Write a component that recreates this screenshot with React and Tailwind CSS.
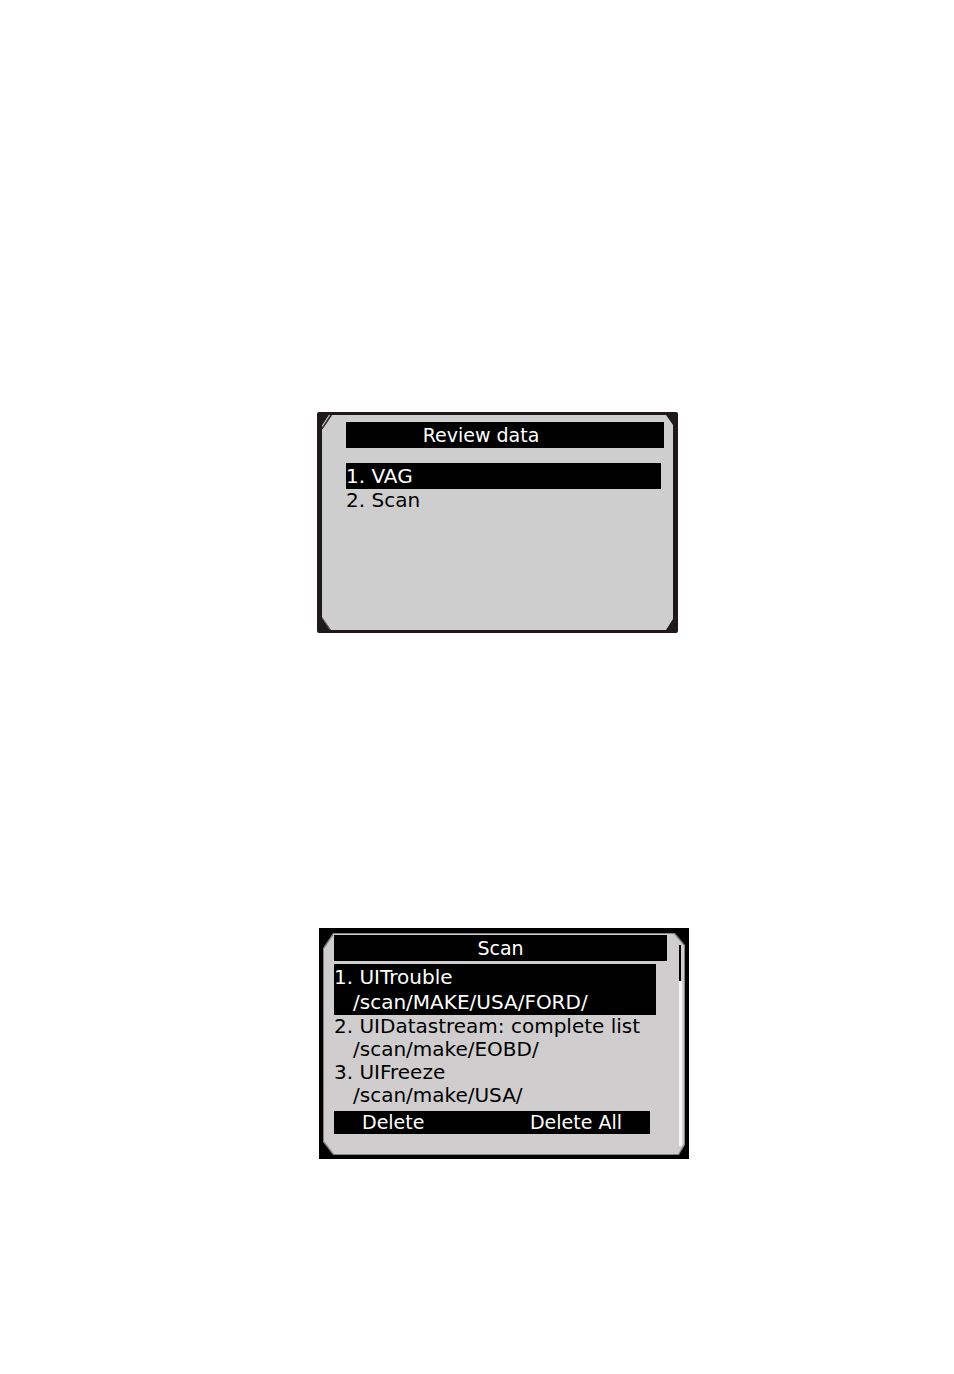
const files = [
  { name: "2. UIDatastream: complete list", path: "/scan/make/EOBD/" },
  { name: "3. UIFreeze", path: "/scan/make/USA/" },
];

function ReviewScreen() {
  return (
    <section
      aria-labelledby="review-title"
      className="relative w-full max-w-[361px] rounded-[2px] bg-[#1f1a19] px-[5px] py-[3px]"
    >
      <div className="min-h-[215px] bg-[#cecece] pt-[7px] pr-[9px] pl-6 [clip-path:polygon(9px_0,calc(100%-7px)_0,100%_10px,100%_calc(100%-11px),calc(100%-7px)_100%,9px_100%,0_calc(100%-13px),0_13px)]">
        <h2
          id="review-title"
          className="bg-black pr-12 text-center leading-[26px] text-white"
        >
          Review data
        </h2>
        <ul className="mt-[15px] mr-[3px] text-[20px]">
          <li>
            <button className="block w-full bg-black text-left leading-[26px] text-white">
              1. VAG
            </button>
          </li>
          <li>
            <button className="block w-full text-left leading-[23px]">
              2. Scan
            </button>
          </li>
        </ul>
      </div>
      <svg
        aria-hidden="true"
        className="absolute top-[3px] left-[5px]"
        width="11"
        height="15"
        viewBox="0 0 11 15"
        fill="none"
      >
        <path d="M0 11.5 7.5 0" stroke="#cecece" strokeWidth="1.2" />
        <path d="M0 14 9.5 0" stroke="#1f1a19" strokeWidth="1.2" />
      </svg>
      <svg
        aria-hidden="true"
        className="absolute bottom-[3px] left-[5px]"
        width="11"
        height="15"
        viewBox="0 0 11 15"
        fill="none"
      >
        <path d="M0 2.5 8 15" stroke="#777270" strokeWidth="0.8" />
      </svg>
    </section>
  );
}

function ScanScreen() {
  return (
    <section
      aria-labelledby="scan-title"
      className="ml-[13px] w-full max-w-[370px] bg-black px-1 pt-[5px] pb-1"
    >
      <div className="bg-[#858585] p-px [clip-path:polygon(10px_0,calc(100%-10px)_0,100%_12px,100%_calc(100%-10px),calc(100%-6px)_100%,10px_100%,0_calc(100%-13px),0_15px)]">
        <div className="flex bg-[#cfcdce] pb-5 pl-[10px] [clip-path:polygon(10px_0,calc(100%-10px)_0,100%_12px,100%_calc(100%-10px),calc(100%-6px)_100%,10px_100%,0_calc(100%-13px),0_15px)]">
          <div className="flex-1 pt-px">
            <h2
              id="scan-title"
              className="bg-black text-center leading-[26px] text-white"
            >
              Scan
            </h2>
            <ul className="mt-[3px] text-[20px]">
              <li className="mr-[11px]">
                <button className="block w-full bg-black pt-px text-left leading-[25px] text-white">
                  1. UITrouble
                  <span className="block pl-[19px]">/scan/MAKE/USA/FORD/</span>
                </button>
              </li>
              {files.map((file) => (
                <li key={file.name}>
                  <button className="block w-full text-left leading-[23px]">
                    {file.name}
                    <span className="block pl-[19px]">{file.path}</span>
                  </button>
                </li>
              ))}
            </ul>
            <div className="mt-1 mr-[17px] flex justify-between bg-black px-7 leading-[23px] text-white">
              <button>Delete</button>
              <button>Delete All</button>
            </div>
          </div>
          <div className="mr-[2px] -mb-3 ml-3 flex w-[3px] flex-col pt-[11px]">
            <div className="mr-px h-9 bg-black" />
            <div className="flex-1 bg-[#f7f7f7]" />
          </div>
        </div>
      </div>
    </section>
  );
}

export default function App() {
  return (
    <main className="flex min-h-screen flex-col items-center gap-[295px] bg-white pt-[412px] pb-[215px] pl-[41px] font-[Verdana,'DejaVu_Sans',sans-serif] text-[19px] text-black">
      <ReviewScreen />
      <ScanScreen />
    </main>
  );
}
